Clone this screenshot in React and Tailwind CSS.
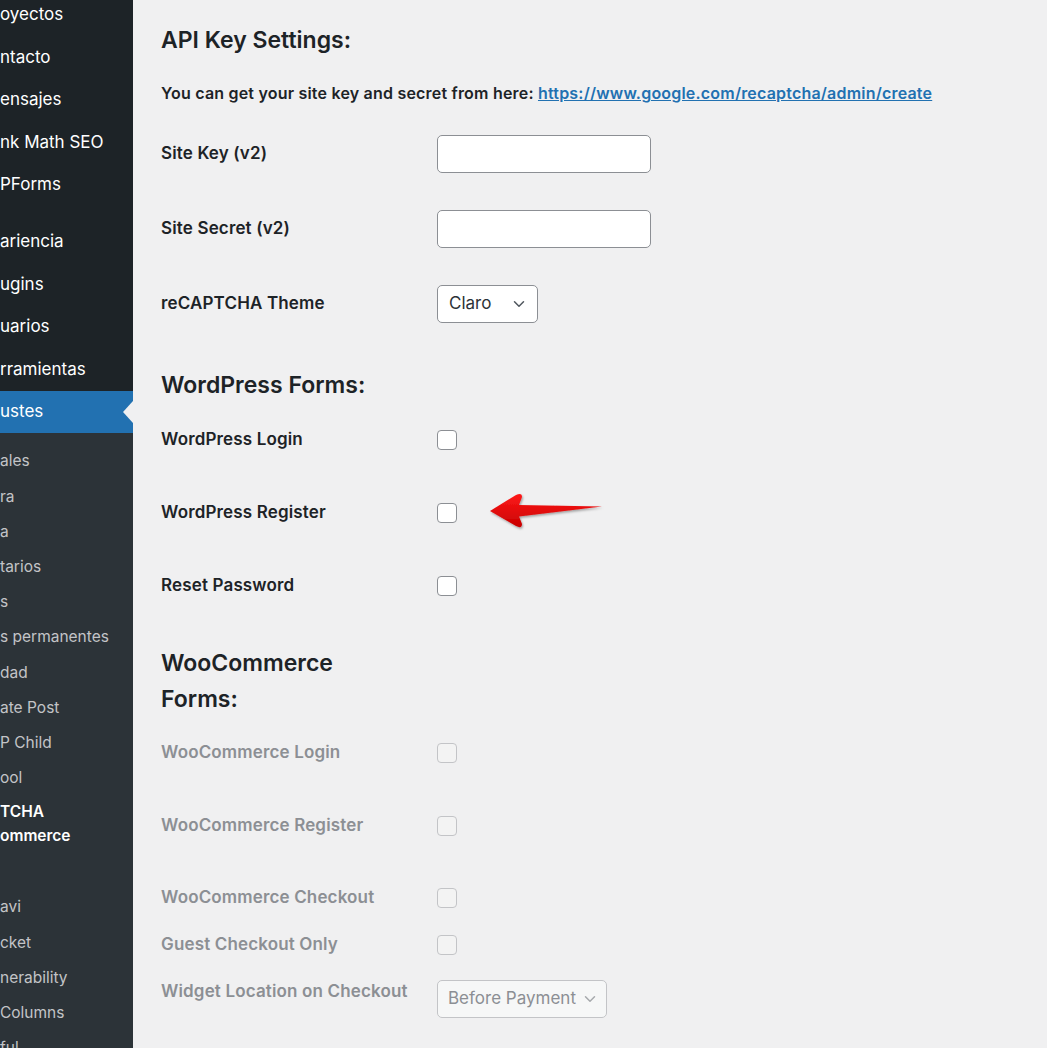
import { ChevronDown } from 'lucide-react'

// Main admin menu (clipped on the left like the screenshot)
const MENU_TOP = ['oyectos', 'ntacto', 'ensajes', 'nk Math SEO', 'PForms']
const MENU_MID = ['ariencia', 'ugins', 'uarios', 'rramientas']
const SUBMENU = ['ales', 'ra', 'a', 'tarios', 's', 's permanentes', 'dad', 'ate Post', 'P Child', 'ool']
const SUBMENU_AFTER = ['avi', 'cket', 'nerability', 'Columns', 'ful']

function Sidebar() {
  return (
    <div className="w-[133px] shrink-0 bg-[#2c3338] overflow-hidden flex flex-col text-white">
      <div className="bg-[#1d2327] -mt-[6.25px]">
        {MENU_TOP.map(t => (
          <div key={t} className="h-[42.5px] flex items-center text-[17px] whitespace-nowrap">{t}</div>
        ))}
        <div className="h-[14.5px]" />
        {MENU_MID.map(t => (
          <div key={t} className="h-[42.5px] flex items-center text-[17px] whitespace-nowrap">{t}</div>
        ))}
        <div className="relative h-[42.5px] flex items-center text-[17px] bg-[#2271b1] whitespace-nowrap">
          ustes
          <span className="absolute right-0 top-1/2 -translate-y-1/2 w-0 h-0 border-y-[11px] border-y-transparent border-r-[10px] border-r-[#f0f0f1]" />
        </div>
      </div>
      <div className="pt-[10.25px] text-[#c3c4c7] text-[15.5px]">
        {SUBMENU.map(t => (
          <div key={t} className="h-[35.2px] flex items-center whitespace-nowrap">{t}</div>
        ))}
        <div className="py-[4.6px] leading-[24px] text-white font-semibold whitespace-nowrap">
          <div>TCHA</div>
          <div>ommerce</div>
        </div>
        <div className="h-[36.8px]" />
        {SUBMENU_AFTER.map(t => (
          <div key={t} className="h-[35.2px] flex items-center whitespace-nowrap">{t}</div>
        ))}
      </div>
    </div>
  )
}

function Checkbox({ disabled }) {
  return (
    <span
      className={
        disabled
          ? 'block w-[20px] h-[20px] rounded-[4px] border border-[#c3c4c7] bg-[#f3f3f3]'
          : 'block w-[20px] h-[20px] rounded-[4px] border-[1.5px] border-[#8c8f94] bg-white'
      }
    />
  )
}

function Row({ label, h, disabled, children }) {
  return (
    <div className="flex items-center" style={{ height: h }}>
      <div className={`w-[276px] shrink-0 text-[17px] tracking-[0.15px] font-semibold ${disabled ? 'text-[#8c8f94]' : 'text-[#1d2327]'}`}>
        {label}
      </div>
      {children}
    </div>
  )
}

function Heading({ children, className = '' }) {
  return <h2 className={`text-[23px] font-semibold text-[#1d2327] ${className}`}>{children}</h2>
}

export default function App() {
  return (
    <div className="relative flex w-full min-h-[1048px] h-[1048px] overflow-hidden bg-[#f0f0f1] font-['Inter',sans-serif]">
      <Sidebar />

      <div className="flex-1 pl-[28px]">
        <Heading className="mt-[25px] leading-[30px]">API Key Settings:</Heading>
        <p className="mt-[27px] leading-[22px] text-[16px] font-semibold text-[#1d2327] tracking-[0.2px] whitespace-nowrap">
          You can get your site key and secret from here:{' '}
          <a className="text-[#2271b1] underline" href="#">https://www.google.com/recaptcha/admin/create</a>
        </p>

        <div className="mt-[12px]">
          <Row label="Site Key (v2)" h={75}>
            <span className="block w-[214px] h-[38px] rounded-[5px] border border-[#8c8f94] bg-white" />
          </Row>
          <Row label="Site Secret (v2)" h={75}>
            <span className="block w-[214px] h-[38px] rounded-[5px] border border-[#8c8f94] bg-white" />
          </Row>
          <Row label="reCAPTCHA Theme" h={75}>
            <span className="flex items-center justify-between w-[101px] h-[38px] rounded-[5px] border border-[#8c8f94] bg-white pl-[11px] pr-[9px] text-[17px] text-[#2c3338]">
              Claro
              <ChevronDown size={18} strokeWidth={2} className="text-[#50575e]" />
            </span>
          </Row>
        </div>

        <Heading className="mt-[29px] leading-[30px]">WordPress Forms:</Heading>
        <div className="mt-[3px]">
          <Row label="WordPress Login" h={73}><Checkbox /></Row>
          <Row label="WordPress Register" h={73}><Checkbox /></Row>
          <Row label="Reset Password" h={73}><Checkbox /></Row>
        </div>

        <Heading className="mt-[23px] leading-[36px]">WooCommerce<br />Forms:</Heading>
        <Row label="WooCommerce Login" h={72} disabled><Checkbox disabled /></Row>
        <Row label="WooCommerce Register" h={73} disabled><Checkbox disabled /></Row>
        <Row label="WooCommerce Checkout" h={72} disabled><Checkbox disabled /></Row>
        <Row label="Guest Checkout Only" h={22} disabled><Checkbox disabled /></Row>
        <div className="flex items-start pt-[24px]">
          <div className="w-[276px] shrink-0 text-[17px] tracking-[0.15px] font-semibold text-[#8c8f94] leading-[22px]">
            Widget Location on Checkout
          </div>
          <span className="flex items-center justify-between w-[170px] h-[38px] rounded-[5px] border border-[#c3c4c7] bg-[#f6f7f7] pl-[10px] pr-[7px] text-[17px] text-[#8c8f94]">
            Before Payment
            <ChevronDown size={18} strokeWidth={2} className="text-[#a7aaad]" />
          </span>
        </div>
      </div>

      {/* red annotation arrow */}
      <svg className="absolute left-[484px] top-[488px]" width="124" height="44" viewBox="484 488 124 44">
        <defs>
          <linearGradient id="ar" x1="0" y1="0" x2="0" y2="1">
            <stop offset="0" stopColor="#ff1a1a" />
            <stop offset="1" stopColor="#c80000" />
          </linearGradient>
          <filter id="sh" x="-10%" y="-30%" width="130%" height="170%">
            <feDropShadow dx="1" dy="1.5" stdDeviation="1" floodColor="#000" floodOpacity="0.35" />
          </filter>
        </defs>
        <path
          d="M490 511 L516 495 Q522 492 522 497 L519 505 L602 506.5 L519 516.5 L522 524 Q522 529 516 526 Z"
          fill="url(#ar)"
          filter="url(#sh)"
        />
      </svg>
    </div>
  )
}
